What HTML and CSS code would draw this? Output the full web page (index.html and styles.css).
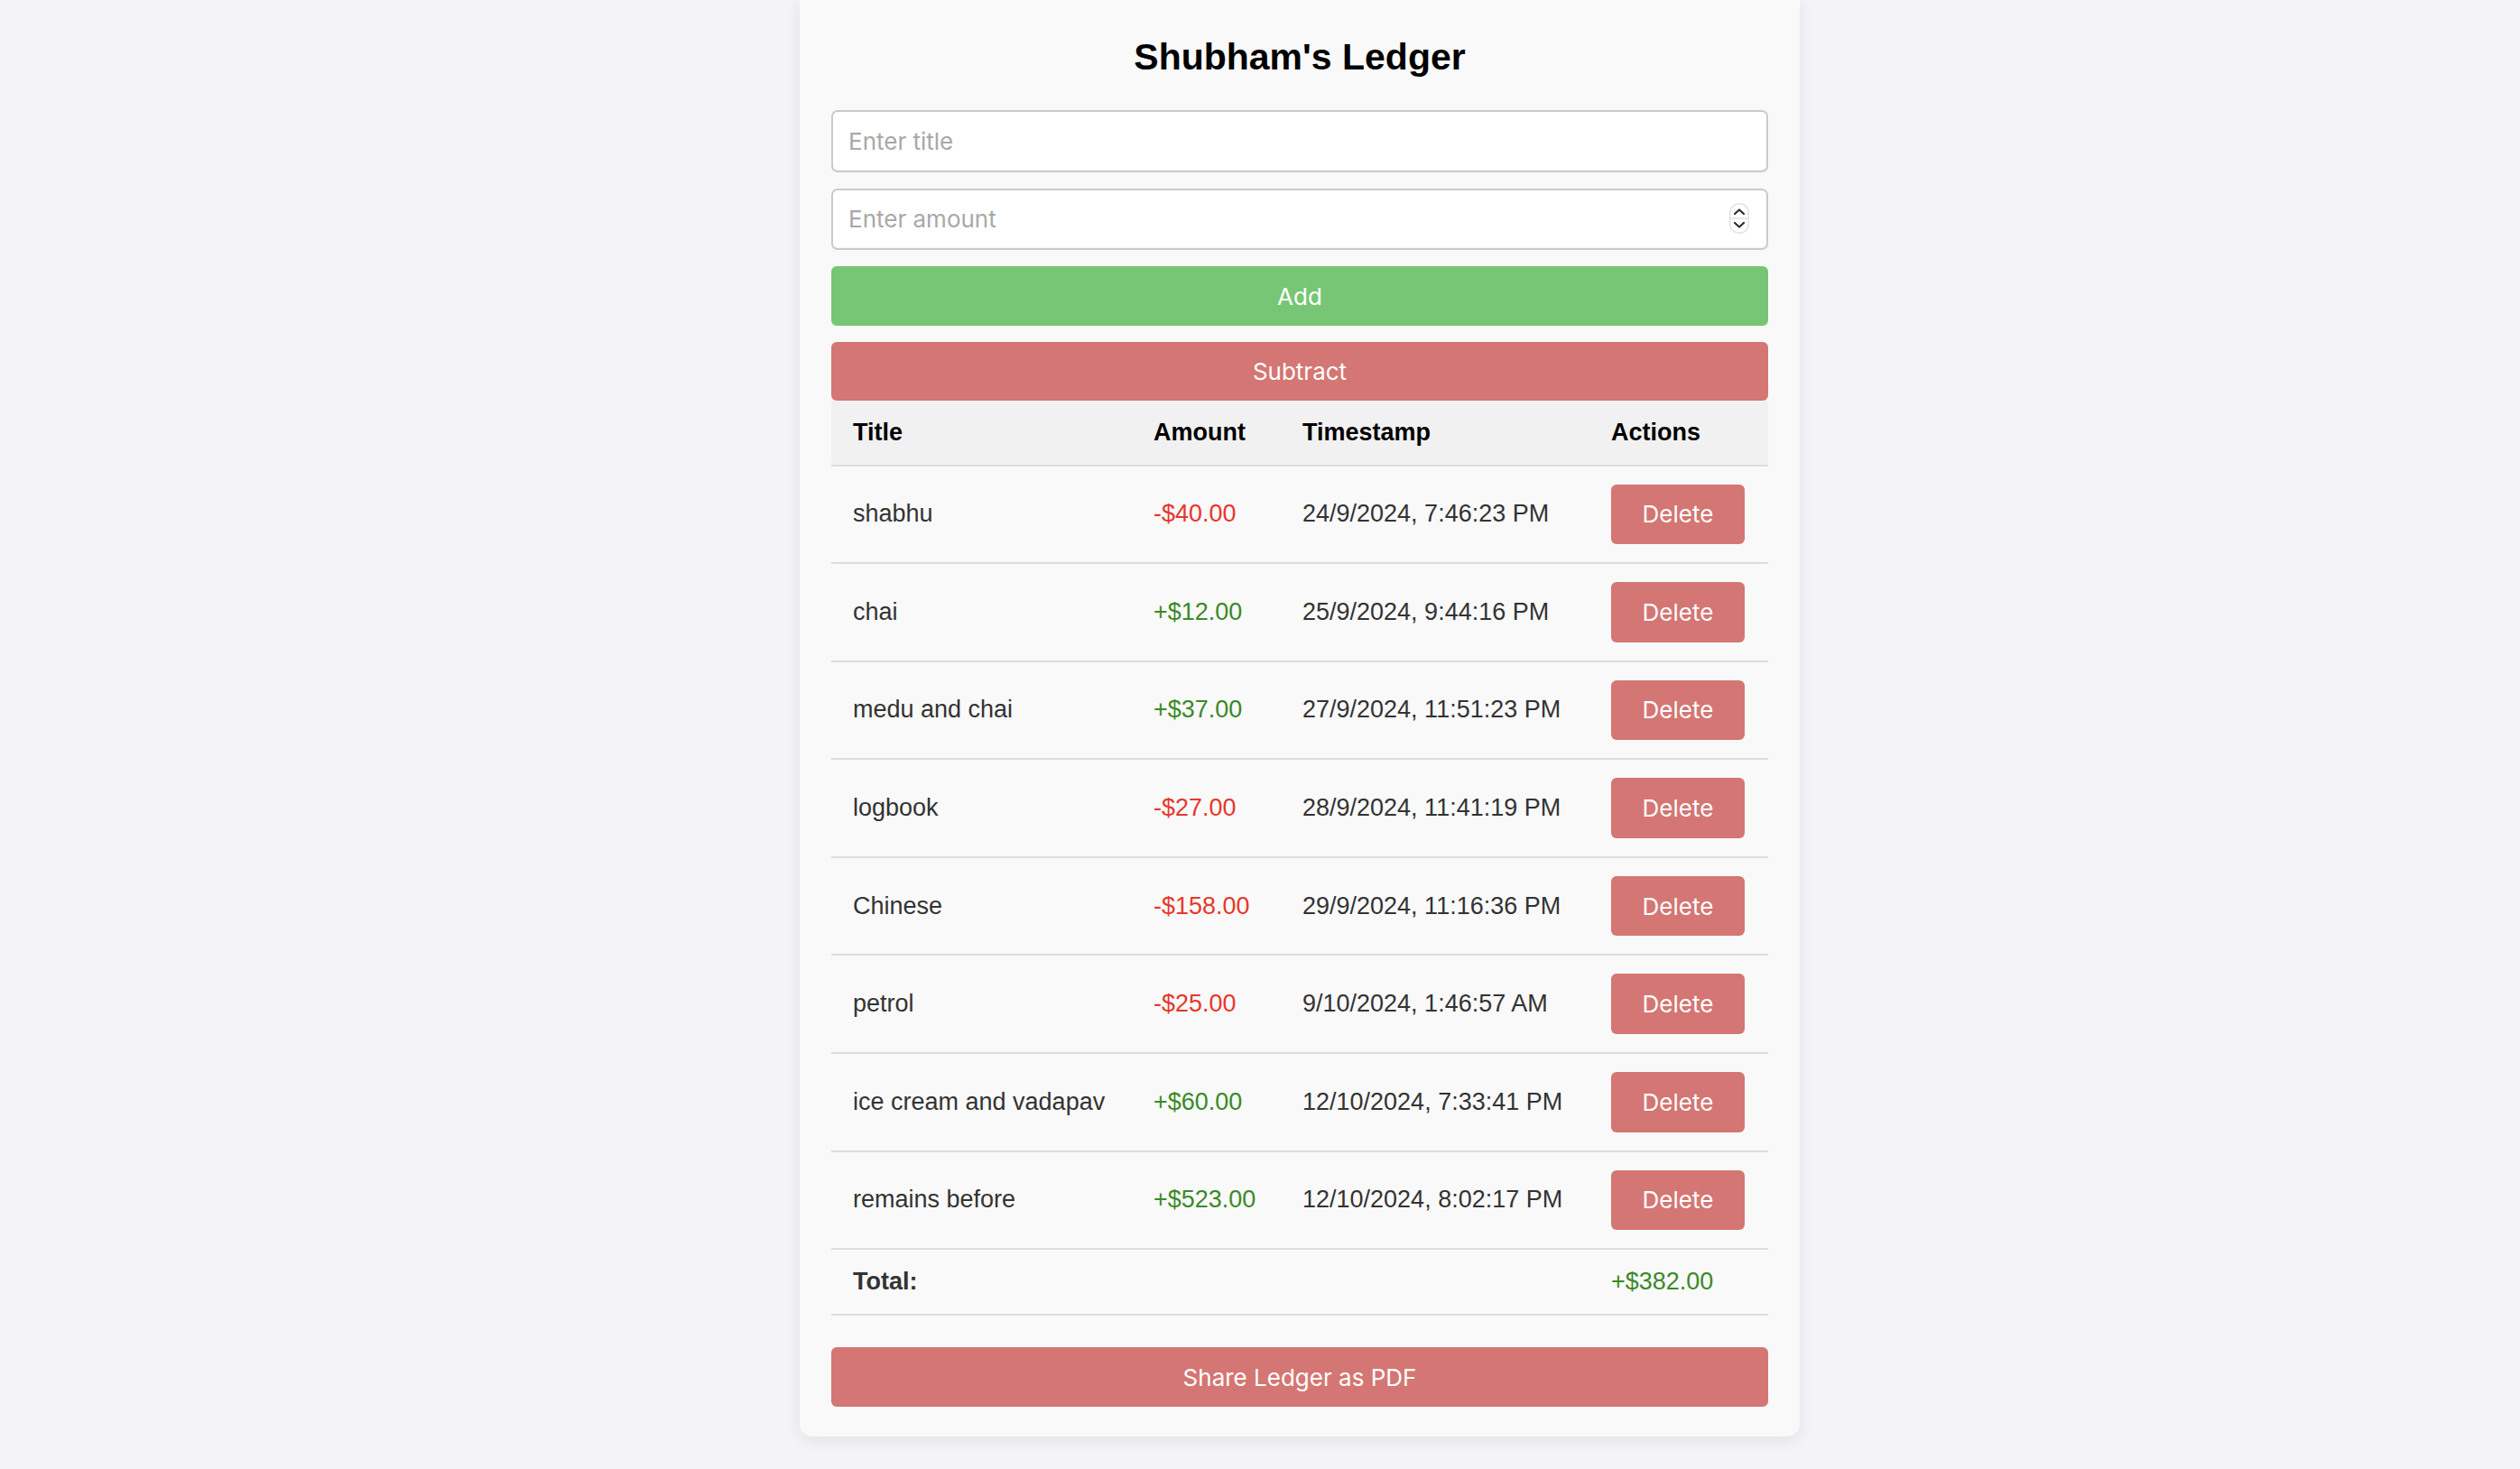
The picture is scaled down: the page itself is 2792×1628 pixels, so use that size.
FILE: index.html
```
<!DOCTYPE html>
<html lang="en">
<head>
<meta charset="utf-8">
<title>Shubham's Ledger</title>
<link rel="stylesheet" href="styles.css">
</head>
<body>
<div class="card">
  <h1 class="title">Shubham's Ledger</h1>
  <input class="field" type="text" placeholder="Enter title">
  <div class="field-wrap">
    <input class="field field-num" type="text" placeholder="Enter amount">
    <svg class="spinner" width="22" height="34" viewBox="0 0 22 34">
      <rect x="0.75" y="0.75" width="20.5" height="32.5" rx="10" fill="#fff" stroke="#e2e2e2" stroke-width="1.5"/>
      <line x1="1" y1="17" x2="21" y2="17" stroke="#e2e2e2" stroke-width="1.5"/>
      <path d="M6 12 L11 7.5 L16 12" fill="none" stroke="#2b2b2b" stroke-width="2.2" stroke-linecap="round" stroke-linejoin="round"/>
      <path d="M6 22 L11 26.5 L16 22" fill="none" stroke="#2b2b2b" stroke-width="2.2" stroke-linecap="round" stroke-linejoin="round"/>
    </svg>
  </div>
  <button class="btn btn-green btn-add">Add</button>
  <button class="btn btn-red btn-sub">Subtract</button>
  <table class="ledger">
    <colgroup>
      <col class="c-title"><col class="c-amount"><col class="c-time"><col class="c-act">
    </colgroup>
    <thead>
      <tr><th>Title</th><th>Amount</th><th>Timestamp</th><th>Actions</th></tr>
    </thead>
    <tbody>
      <tr><td>shabhu</td><td class="neg">-$40.00</td><td>24/9/2024, 7:46:23 PM</td><td><button class="btn btn-red btn-del">Delete</button></td></tr>
      <tr><td>chai</td><td class="pos">+$12.00</td><td>25/9/2024, 9:44:16 PM</td><td><button class="btn btn-red btn-del">Delete</button></td></tr>
      <tr><td>medu and chai</td><td class="pos">+$37.00</td><td>27/9/2024, 11:51:23 PM</td><td><button class="btn btn-red btn-del">Delete</button></td></tr>
      <tr><td>logbook</td><td class="neg">-$27.00</td><td>28/9/2024, 11:41:19 PM</td><td><button class="btn btn-red btn-del">Delete</button></td></tr>
      <tr><td>Chinese</td><td class="neg">-$158.00</td><td>29/9/2024, 11:16:36 PM</td><td><button class="btn btn-red btn-del">Delete</button></td></tr>
      <tr><td>petrol</td><td class="neg">-$25.00</td><td>9/10/2024, 1:46:57 AM</td><td><button class="btn btn-red btn-del">Delete</button></td></tr>
      <tr><td>ice cream and vadapav</td><td class="pos">+$60.00</td><td>12/10/2024, 7:33:41 PM</td><td><button class="btn btn-red btn-del">Delete</button></td></tr>
      <tr><td>remains before</td><td class="pos">+$523.00</td><td>12/10/2024, 8:02:17 PM</td><td><button class="btn btn-red btn-del">Delete</button></td></tr>
      <tr class="total-row"><td class="total-label" colspan="3">Total:</td><td class="pos">+$382.00</td></tr>
    </tbody>
  </table>
  <button class="btn btn-red btn-share">Share Ledger as PDF</button>
</div>
</body>
</html>
```
FILE: styles.css
```
* {
  box-sizing: border-box;
}

html, body {
  margin: 0;
  padding: 0;
}

body {
  background: #f4f4f8;
  display: flex;
  justify-content: center;
  align-items: flex-start;
  padding-left: 88px;
  min-height: 1628px;
  font-family: "Liberation Sans", Arial, sans-serif;
}

.card {
  width: 1108px;
  background: #f9f9f9;
  border-radius: 0 0 14px 14px;
  box-shadow: 0 4px 18px rgba(0, 0, 0, 0.08);
  padding: 40px 35px 33px;
  display: flex;
  flex-direction: column;
}

.title {
  margin: 0 0 36px;
  font-family: "Liberation Sans", Arial, sans-serif;
  font-weight: bold;
  font-size: 41px;
  line-height: 46px;
  color: #000;
  text-align: center;
}

.field {
  display: block;
  width: 100%;
  height: 68.5px;
  margin: 0 0 18px;
  padding: 0 17px;
  border: 2px solid #cacaca;
  border-radius: 7px;
  background: #fff;
  font-family: Inter, "Open Sans", sans-serif;
  font-size: 26px;
  color: #222;
  outline: none;
  box-shadow: inset 0 -1px 0 rgba(0, 0, 0, 0.04);
}

.field::placeholder {
  color: #a8a8a8;
}

.field-wrap {
  position: relative;
}

.spinner {
  position: absolute;
  right: 21px;
  top: 16px;
}

.btn {
  display: block;
  border: none;
  border-radius: 6px;
  color: #fff;
  font-family: Inter, "Open Sans", sans-serif;
  font-size: 26px;
  cursor: pointer;
  padding: 0;
}

.btn-green {
  background: #77c675;
}

.btn-red {
  background: #d47673;
}

.btn-add {
  width: 100%;
  height: 66px;
  margin: 0 0 17.5px;
}

.btn-sub {
  width: 100%;
  height: 65px;
  margin: 0;
}

.btn-share {
  width: 100%;
  height: 66px;
  margin-top: 35px;
}

.ledger {
  width: 100%;
  border-collapse: collapse;
  table-layout: fixed;
  font-family: "Liberation Sans", Arial, sans-serif;
  font-size: 27px;
  color: #333;
}

.c-title { width: 333px; }
.c-amount { width: 165px; }
.c-time { width: 342px; }
.c-act { width: 198px; }

.ledger th,
.ledger td {
  padding: 20px 24px;
  text-align: left;
  border-bottom: 2px solid #dddddd;
  line-height: 31px;
  white-space: nowrap;
}

.ledger th {
  background: #f1f1f1;
  color: #000;
  font-weight: bold;
}

.ledger td {
  vertical-align: middle;
}

.neg {
  color: #e8372b;
}

.ledger td.pos {
  color: #3a8a28;
}

.btn-del {
  width: 148px;
  height: 66.6px;
}

.total-label {
  font-weight: bold;
}
```
